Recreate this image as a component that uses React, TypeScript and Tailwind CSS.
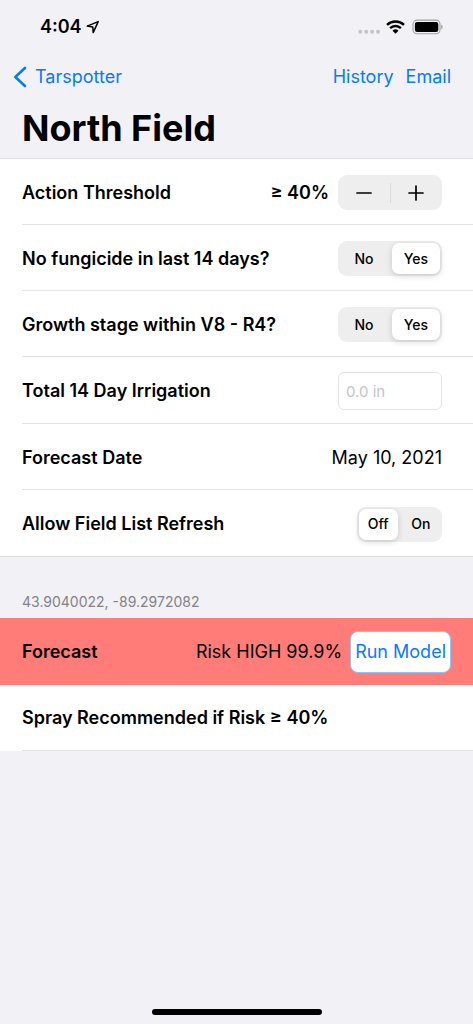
import { useState, type ReactNode } from "react";

function StatusBar() {
  return (
    <div className="flex h-[54px] items-center justify-between pr-[30px] pl-10">
      <div className="flex items-center gap-1">
        <span className="text-lg font-semibold">4:04</span>
        <svg width="14" height="14" viewBox="0 0 14 14" fill="none" stroke="#000" strokeWidth="1.5" strokeLinejoin="round" aria-hidden="true">
          <path d="M12.2 1.6 1.2 6.1l5.6 1 .4 5.5z" />
        </svg>
      </div>
      <div className="flex items-center gap-[6px]">
        <svg width="23" height="16" viewBox="0 0 23 16" fill="#c4c4c8" aria-hidden="true">
          <circle cx="3.3" cy="12.8" r="2" />
          <circle cx="9.2" cy="12.8" r="2" />
          <circle cx="15.1" cy="12.8" r="2" />
          <circle cx="21" cy="12.8" r="2" />
        </svg>
        <svg width="19" height="14" viewBox="0 0 19 14" fill="none" stroke="#000" strokeWidth="2.4" aria-hidden="true">
          <path d="M1 4.9a12.3 12.3 0 0 1 17 0" />
          <path d="M4.1 8.2a7.8 7.8 0 0 1 10.8 0" />
          <path d="M9.5 13.7 6.5 10.7a4.3 4.3 0 0 1 6 0z" fill="#000" stroke="none" />
        </svg>
        <svg width="32" height="16" viewBox="0 0 32 16" aria-hidden="true">
          <rect x="2" y="1.1" width="27" height="13.6" rx="4" fill="none" stroke="#a0a0a4" strokeWidth="1.1" />
          <rect x="3.9" y="2.9" width="23.4" height="10" rx="2.2" />
          <path d="M30.2 5.6q1.5.8 1.5 2.4t-1.5 2.4z" fill="#a0a0a4" />
        </svg>
      </div>
    </div>
  );
}

function Row({ label, htmlFor, children }: { label: string; htmlFor?: string; children?: ReactNode }) {
  return (
    <div className="ml-[22px] flex min-h-[66px] items-center justify-between border-b border-[#e3e3e5] pt-[15px] pr-[31px] pb-[13px] last:border-b-0">
      {htmlFor ? (
        <label htmlFor={htmlFor} className="font-semibold">{label}</label>
      ) : (
        <span className="font-semibold">{label}</span>
      )}
      {children}
    </div>
  );
}

function Segmented({ name, label, options, initial, narrow }: { name: string; label: string; options: string[]; initial: string; narrow?: boolean }) {
  const [value, setValue] = useState(initial);
  return (
    <div
      role="radiogroup"
      aria-label={label}
      className={`grid h-[35px] grid-cols-2 gap-1 rounded-[9px] bg-[#eeeeee] p-[2px] text-sm ${narrow ? "w-[85px]" : "w-[104px]"}`}
    >
      {options.map((option) => (
        <label
          key={option}
          className="flex cursor-pointer items-center justify-center rounded-[7px] font-medium has-checked:bg-white has-checked:shadow-[0_2px_6px_rgba(0,0,0,0.16)]"
        >
          <input
            type="radio"
            name={name}
            className="sr-only"
            checked={value === option}
            onChange={() => setValue(option)}
          />
          {option}
        </label>
      ))}
    </div>
  );
}

export default function App() {
  const [threshold, setThreshold] = useState(40);
  return (
    <div className="flex min-h-screen flex-col bg-[#f2f1f6] font-['Inter',sans-serif] text-lg text-black">
      <StatusBar />
      <header>
        <nav className="flex h-[46px] items-center justify-between pr-[22px] pl-[13px] text-[#067bfe]">
          <a href="#tarspotter" className="flex items-center gap-2">
            <svg width="14" height="22" viewBox="0 0 14 22" fill="none" stroke="currentColor" strokeWidth="2.6" strokeLinecap="round" strokeLinejoin="round" aria-hidden="true">
              <path d="M12 2 2.3 11 12 20" />
            </svg>
            Tarspotter
          </a>
          <div className="flex gap-3">
            <a href="#history">History</a>
            <a href="#email">Email</a>
          </div>
        </nav>
        <h1 className="px-[22px] pt-[6px] pb-2 text-4xl leading-[44px] font-bold">North Field</h1>
      </header>
      <main>
        <section className="border-y border-[#e0e0e3] bg-white">
          <Row label="Action Threshold">
            <div className="flex items-center gap-[9px]">
              <output className="font-semibold">≥ {threshold}%</output>
              <div className="flex h-[35px] w-[104px] items-center rounded-[9px] bg-[#eeeeee]">
                <button type="button" aria-label="Decrease threshold" className="flex h-full flex-1 items-center justify-center" onClick={() => setThreshold(Math.max(0, threshold - 5))}>
                  <svg width="16" height="16" viewBox="0 0 16 16" stroke="#000" strokeWidth="1.7" strokeLinecap="round">
                    <path d="M1 8h14" />
                  </svg>
                </button>
                <span className="h-5 w-px bg-[#d9d9db]" />
                <button type="button" aria-label="Increase threshold" className="flex h-full flex-1 items-center justify-center" onClick={() => setThreshold(Math.min(100, threshold + 5))}>
                  <svg width="16" height="16" viewBox="0 0 16 16" stroke="#000" strokeWidth="1.7" strokeLinecap="round">
                    <path d="M1 8h14M8 1v14" />
                  </svg>
                </button>
              </div>
            </div>
          </Row>
          <Row label="No fungicide in last 14 days?">
            <Segmented name="fungicide" label="No fungicide in last 14 days?" options={["No", "Yes"]} initial="Yes" />
          </Row>
          <Row label="Growth stage within V8 - R4?">
            <Segmented name="growth" label="Growth stage within V8 - R4?" options={["No", "Yes"]} initial="Yes" />
          </Row>
          <Row label="Total 14 Day Irrigation" htmlFor="irrigation">
            <input
              id="irrigation"
              type="text"
              inputMode="decimal"
              placeholder="0.0 in"
              className="h-[38px] w-[104px] rounded-[6px] border border-[#e4e4e6] bg-white px-[7px] text-[15px] placeholder:text-[#c4c4c6]"
            />
          </Row>
          <Row label="Forecast Date">
            <time dateTime="2021-05-10">May 10, 2021</time>
          </Row>
          <Row label="Allow Field List Refresh">
            <Segmented name="refresh" label="Allow Field List Refresh" options={["Off", "On"]} initial="Off" narrow />
          </Row>
        </section>
        <section>
          <h2 className="px-[22px] pt-[35px] pb-[6px] text-sm leading-5 text-[#828287]">43.9040022, -89.2972082</h2>
          <div className="flex h-[67px] items-center justify-between bg-[#ff7c79] px-[22px]">
            <span className="font-semibold">Forecast</span>
            <div className="flex items-center gap-2">
              <span>Risk HIGH 99.9%</span>
              <button type="button" className="h-[42px] rounded-lg border border-[#8fc2fb] bg-white px-1 text-[#067bfe]">
                Run Model
              </button>
            </div>
          </div>
          <div className="bg-white">
            <div className="ml-[22px] flex h-[66px] items-center border-b border-[#e3e3e5]">
              <span className="font-semibold">Spray Recommended if Risk ≥ {threshold}%</span>
            </div>
          </div>
        </section>
      </main>
      <div className="mx-auto mt-auto mb-[9px] h-[6px] w-[170px] rounded-full bg-black" />
    </div>
  );
}
